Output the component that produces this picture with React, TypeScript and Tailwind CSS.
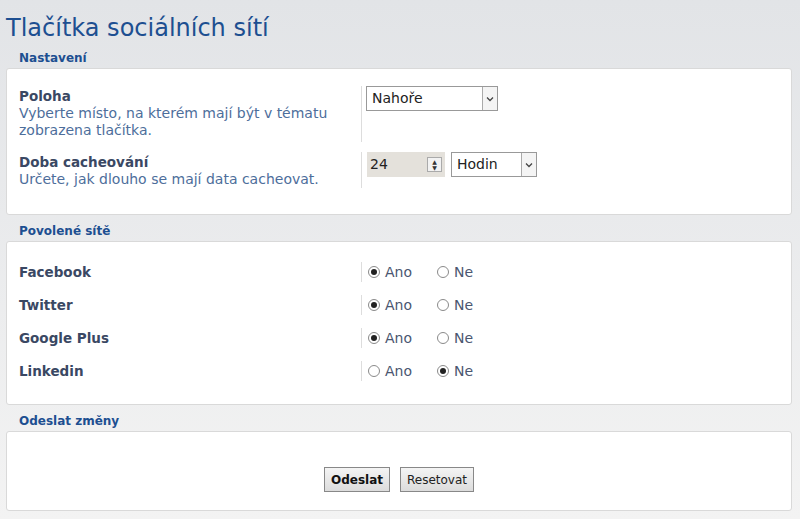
import React from "react";

const F = { fontFamily: '"DejaVu Sans", Verdana, sans-serif' };

function Radio({ on }: { on: boolean }) {
  return (
    <span className="inline-flex w-[12px] h-[12px] rounded-full border border-[#8a8a8a] bg-white items-center justify-center">
      {on && <span className="w-[6px] h-[6px] rounded-full bg-[#222]" />}
    </span>
  );
}

function Chevron() {
  return (
    <span className="w-[15px] self-stretch border-l border-[#aaa] bg-[#f4f4f4] flex items-center justify-center">
      <svg width="8" height="6" viewBox="0 0 8 6"><path d="M1 1.5 L4 4.5 L7 1.5" stroke="#444" strokeWidth="1.3" fill="none" /></svg>
    </span>
  );
}

function Legend({ t }: { t: string }) {
  return <div className="pl-[13px] h-[19px] text-[12px] font-bold text-[#1d4f91] leading-[19px]">{t}</div>;
}

export default function App() {
  const nets: [string, boolean][] = [["Facebook", true], ["Twitter", true], ["Google Plus", true], ["Linkedin", false]];
  return (
    <div style={F} className="w-[800px] h-[519px] overflow-hidden bg-gradient-to-b from-[#e2e4e7] to-[#f3f3f3] px-[6px] pr-[8px]">
      <h1 className="text-[24px] text-[#1d4f91] pt-[12px] h-[49px] leading-[32px]">Tlačítka sociálních sítí</h1>
      <Legend t="Nastavení" />
      <div className="bg-white border border-[#d9d9d9] rounded-[3px] h-[147px] pt-[17px] px-[12px] text-[14px]">
        <div className="flex h-[66px]">
          <div className="w-[342px] leading-[17px] pt-[2px]">
            <div className="font-bold text-[13.5px] text-[#3a4863]">Poloha</div>
            <div className="text-[#4d6e9b]">Vyberte místo, na kterém mají být v tématu zobrazena tlačítka.</div>
          </div>
          <div className="border-l border-[#ddd] h-[56px] pl-[4px]">
            <div className="w-[132px] h-[25px] border border-[#999] flex items-center">
              <span className="flex-1 pl-[5px] text-[#222]">Nahoře</span>
              <Chevron />
            </div>
          </div>
        </div>
        <div className="flex">
          <div className="w-[342px] leading-[17px] pt-[2px]">
            <div className="font-bold text-[13.5px] text-[#3a4863]">Doba cacheování</div>
            <div className="text-[#4d6e9b]">Určete, jak dlouho se mají data cacheovat.</div>
          </div>
          <div className="border-l border-[#ddd] h-[36px] pl-[5px] flex items-start gap-[6px]">
            <div className="w-[78px] h-[25px] bg-[#e4e1db] flex items-center justify-between pl-[3px] pr-[3px]">
              <span className="text-[#222]">24</span>
              <span className="w-[15px] h-[15px] border border-[#aaa] bg-[#f2f2f2] flex flex-col items-center justify-center text-[6px] leading-[6px] text-[#333]">▲<br />▼</span>
            </div>
            <div className="w-[86px] h-[25px] border border-[#999] flex items-center">
              <span className="flex-1 pl-[5px] text-[#222]">Hodin</span>
              <Chevron />
            </div>
          </div>
        </div>
      </div>
      <div className="h-[7px]" />
      <Legend t="Povolené sítě" />
      <div className="bg-white border border-[#d9d9d9] rounded-[3px] h-[164px] pt-[20px] px-[12px] text-[14px]">
        {nets.map(([n, on]) => (
          <div key={n} className="flex h-[33px]">
            <div className="w-[342px] font-bold text-[13.5px] text-[#3a4863] leading-[20px]">{n}</div>
            <div className="border-l border-[#ddd] h-[20px] pl-[6px] flex items-center text-[#4a5670]">
              <Radio on={on} /><span className="ml-[5px] w-[52px]">Ano</span>
              <Radio on={!on} /><span className="ml-[5px]">Ne</span>
            </div>
          </div>
        ))}
      </div>
      <div className="h-[7px]" />
      <Legend t="Odeslat změny" />
      <div className="bg-white border border-[#d9d9d9] rounded-[3px] h-[80px] flex justify-center items-start pt-[35px] gap-[10px] text-[12px]">
        <button className="h-[25px] px-[6px] border border-[#888] bg-gradient-to-b from-[#f4f4f4] to-[#dcdcdc] font-bold text-[#111]">Odeslat</button>
        <button className="h-[25px] px-[6px] border border-[#888] bg-gradient-to-b from-[#f4f4f4] to-[#dcdcdc] text-[#222]">Resetovat</button>
      </div>
    </div>
  );
}
